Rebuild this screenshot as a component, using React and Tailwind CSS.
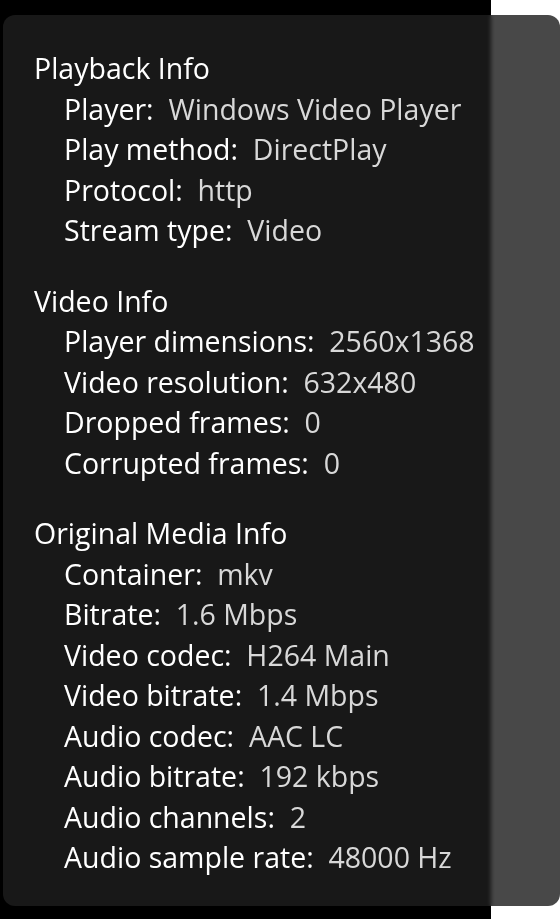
import React from "react";

const sections = [
  {
    title: "Playback Info",
    rows: [
      ["Player", "Windows Video Player"],
      ["Play method", "DirectPlay"],
      ["Protocol", "http"],
      ["Stream type", "Video"],
    ],
  },
  {
    title: "Video Info",
    rows: [
      ["Player dimensions", "2560x1368"],
      ["Video resolution", "632x480"],
      ["Dropped frames", "0"],
      ["Corrupted frames", "0"],
    ],
  },
  {
    title: "Original Media Info",
    rows: [
      ["Container", "mkv"],
      ["Bitrate", "1.6 Mbps"],
      ["Video codec", "H264 Main"],
      ["Video bitrate", "1.4 Mbps"],
      ["Audio codec", "AAC LC"],
      ["Audio bitrate", "192 kbps"],
      ["Audio channels", "2"],
      ["Audio sample rate", "48000 Hz"],
    ],
  },
];

export default function App() {
  return (
    <div className="relative h-[919px] w-[560px] overflow-hidden flex">
      <div className="flex-1 bg-black" />
      <div className="w-[69px] bg-white" />
      <div
        className="absolute left-[3px] top-[15px] right-0 bottom-[13px] rounded-[12px] bg-[rgba(30,30,30,0.81)] backdrop-blur-[2px] pl-[31px] pt-[33px]"
        style={{ fontFamily: '"Open Sans", "Noto Sans", sans-serif' }}
      >
        <div className="flex flex-col gap-[30px] text-[28.5px] leading-[40.5px]">
          {sections.map((s) => (
            <div key={s.title} className="flex flex-col">
              <div className="text-white">{s.title}</div>
              {s.rows.map(([k, v]) => (
                <div key={k} className="pl-[30px] whitespace-pre">
                  <span className="text-white">{k}:</span>
                  <span className="text-[#d8d8d8]">{"  " + v}</span>
                </div>
              ))}
            </div>
          ))}
        </div>
      </div>
    </div>
  );
}
